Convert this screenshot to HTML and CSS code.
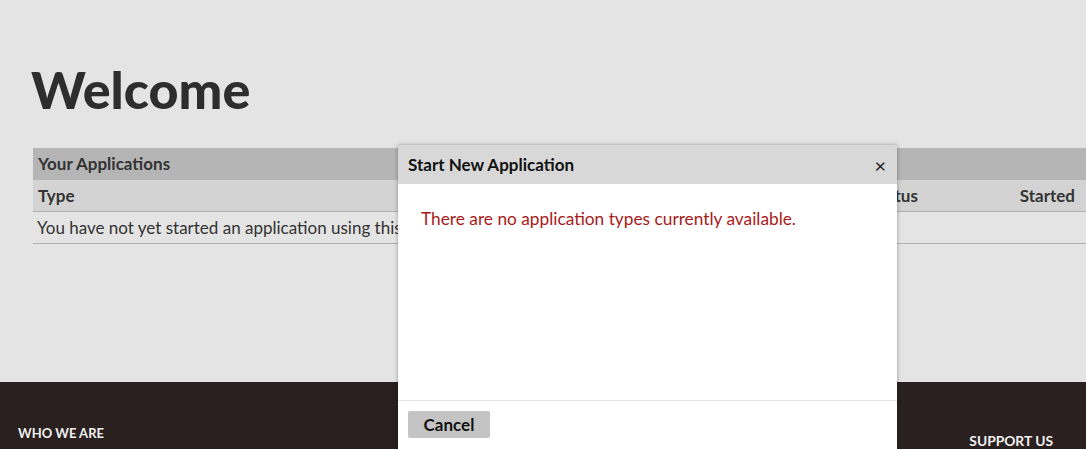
FILE: index.html
```html
<!DOCTYPE html>
<html lang="en">
<head>
    <meta charset="UTF-8">
    <title>Welcome</title>
    <link rel="stylesheet" href="styles.css">
</head>
<body>
    <div class="page">
        <h1>Welcome</h1>
        <div class="apps">
            <div class="apps-title">Your Applications</div>
            <div class="apps-head">
                <span class="col-type">Type</span>
                <span class="col-status">Status</span>
                <span class="col-started">Started</span>
            </div>
            <div class="apps-row">You have not yet started an application using this account.</div>
        </div>
    </div>

    <footer class="footer">
        <div class="footer-col">Who we are</div>
        <div class="footer-col support">Support us</div>
    </footer>

    <!-- modal dialog -->
    <div class="modal">
        <div class="modal-head">
            <span class="modal-title">Start New Application</span>
            <span class="modal-close">&times;</span>
        </div>
        <div class="modal-body">
            <p class="error">There are no application types currently available.</p>
        </div>
        <div class="modal-foot">
            <button class="btn">Cancel</button>
        </div>
    </div>
</body>
</html>
```

FILE: styles.css
```css
body {
    font-family: Lato, "Liberation Sans", sans-serif;
    background: #e4e4e4;
    color: #333;
    margin: 0;
    overflow: hidden;
}
.page {
    height: 382px;
    padding: 1px 0 0 33px;
    box-sizing: border-box;
}
h1 {
    font-size: 52px;
    font-weight: 900;
    margin: 58px 0 29px -2px;
    line-height: 60px;
    color: #2d2d2d;
}
.apps {
    font-size: 17px;
}
.apps-title {
    background: #b5b5b5;
    font-weight: bold;
    height: 32px;
    line-height: 32px;
    padding-left: 5px;
}
.apps-head {
    display: flex;
    background: #d3d3d3;
    font-weight: bold;
    height: 31px;
    line-height: 31px;
    border-bottom: 1px solid #b0b0b0;
    padding: 0 11px 0 5px;
}
.col-type {
    flex: 1;
}
.col-status {
    width: 149px;
}
.apps-row {
    height: 31px;
    line-height: 31px;
    padding-left: 4px;
    border-bottom: 1px solid #b0b0b0;
    white-space: nowrap;
}
.footer {
    background: #2b2020;
    height: 67px;
    display: flex;
    justify-content: space-between;
    align-items: flex-start;
    padding: 0 33px 0 18px;
    color: #f0f0f0;
    font-size: 13px;
    font-weight: bold;
    text-transform: uppercase;
}
.footer-col {
    margin-top: 43px;
}
.support {
    margin-top: 50px;
    font-size: 13.8px;
}
.modal {
    position: absolute;
    left: 398px;
    top: 145px;
    width: 499px;
    background: #fff;
    box-shadow: 0 0 4px rgba(0, 0, 0, 0.35);
}
.modal-head {
    display: flex;
    justify-content: space-between;
    align-items: center;
    background: #d8d8d8;
    height: 39px;
    padding: 0 11px 0 10px;
}
.modal-title {
    font-size: 17px;
    font-weight: bold;
    color: #111;
}
.modal-close {
    font-size: 20px;
    color: #222;
}
.modal-body {
    height: 216px;
    border-bottom: 1px solid #e6e6e6;
}
.error {
    margin: 0;
    padding: 24px 0 0 23px;
    font-size: 17.3px;
    color: #a81a1a;
}
.modal-foot {
    padding: 10px 10px 20px;
}
.btn {
    font-family: Lato, "Liberation Sans", sans-serif;
    font-size: 17px;
    font-weight: bold;
    background: #c4c4c4;
    color: #111;
    border: none;
    border-radius: 2px;
    width: 82px;
    height: 27px;
    padding: 0;
}
```
